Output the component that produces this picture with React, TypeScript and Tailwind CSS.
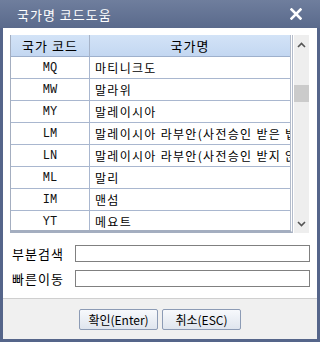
import React from 'react';

const rows = [
  { code: 'MQ', name: '마티니크도' },
  { code: 'MW', name: '말라위' },
  { code: 'MY', name: '말레이시아' },
  { code: 'LM', name: '말레이시아 라부안(사전승인 받은 법인)' },
  { code: 'LN', name: '말레이시아 라부안(사전승인 받지 않은 법인)' },
  { code: 'ML', name: '말리' },
  { code: 'IM', name: '맨섬' },
  { code: 'YT', name: '메요트' },
  { code: 'MX', name: '멕시코' },
];

const font = { fontFamily: '"Noto Sans CJK KR", "Liberation Sans", sans-serif' };

export default function App() {
  return (
    <div
      className="w-[320px] h-[342px] bg-[#55658a] flex flex-col px-[3px] pb-[3px] text-[12px] text-black"
      style={font}
    >
      {/* title bar */}
      <div className="h-[28px] flex items-center justify-between bg-gradient-to-b from-[#6f7e9d] to-[#5a6a8c] -mx-[3px] pl-[17px] pr-[18px]">
        <span className="text-white text-[13px] leading-none tracking-[1px]">국가명 코드도움</span>
        <svg width="12" height="12" viewBox="0 0 12 12">
          <path d="M1.5 1.5 L10.5 10.5 M10.5 1.5 L1.5 10.5" stroke="#ffffff" strokeWidth="2.6" strokeLinecap="square" />
        </svg>
      </div>

      {/* body */}
      <div className="flex-1 bg-white flex flex-col">
        <div className="pt-[7px] pl-[7px] pr-[8px]">
          <div className="flex h-[198px] gap-[1px]">
            {/* table */}
            <div className="w-[283px] h-full border-l border-r-[3px] border-r-[#b4bccb] border-l-[#a4aec0] border-b-[3px] border-b-[#a4aec0] overflow-hidden flex flex-col" style={{ borderRightStyle: 'double' }}>
              <div className="h-[22px] shrink-0 flex bg-gradient-to-b from-[#d3e3f7] to-[#c3d7f1] border-b border-[#9eb0cc] text-[13px] tracking-[1px]">
                <div className="w-[79px] border-r border-[#a6b3c8] flex items-center justify-center">국가 코드</div>
                <div className="flex-1 flex items-center justify-center">국가명</div>
              </div>
              {rows.map((r) => (
                <div key={r.code} className="h-[22px] shrink-0 flex border-b border-[#a9b7cf]">
                  <div
                    className="w-[79px] border-r border-[#a9b7cf] flex items-center justify-center text-[12px] text-[#111]"
                    style={{ fontFamily: '"Liberation Mono", monospace' }}
                  >
                    {r.code}
                  </div>
                  <div className="flex-1 flex items-center pl-[5px] whitespace-nowrap overflow-hidden tracking-[1.3px]">{r.name}</div>
                </div>
              ))}
            </div>
            {/* scrollbar */}
            <div className="w-[15px] h-full bg-[#eeeeee] flex flex-col">
              <div className="h-[18px] flex items-center justify-center pt-[2px]">
                <svg width="9" height="6" viewBox="0 0 9 6">
                  <path d="M1 5 L4.5 1.5 L8 5" stroke="#555" strokeWidth="1.6" fill="none" />
                </svg>
              </div>
              <div className="h-[32px]" />
              <div className="h-[17px] bg-[#cbcbcb]" />
              <div className="flex-1" />
              <div className="h-[18px] flex items-center justify-center">
                <svg width="9" height="6" viewBox="0 0 9 6">
                  <path d="M1 1 L4.5 4.5 L8 1" stroke="#555" strokeWidth="1.6" fill="none" />
                </svg>
              </div>
            </div>
          </div>
        </div>

        {/* search fields */}
        <div className="mt-[12px] pl-[9px] pr-[7px] flex flex-col gap-[8px]">
          <div className="flex items-center h-[17px]">
            <span className="w-[63px] shrink-0 text-[13px] leading-none tracking-[1px]">부분검색</span>
            <div className="flex-1 h-[17px] border border-[#808080] bg-white" />
          </div>
          <div className="flex items-center h-[17px]">
            <span className="w-[63px] shrink-0 text-[13px] leading-none tracking-[1px]">빠른이동</span>
            <div className="flex-1 h-[17px] border border-[#808080] bg-white" />
          </div>
        </div>

        {/* footer */}
        <div className="mt-[11px] flex-1 border-t border-[#cfcfcf] bg-[#f0f0f0] flex justify-center gap-[4px] pt-[10px]">
          <button className="w-[79px] h-[21px] rounded-[2px] border border-[#8c9bb5] bg-gradient-to-b from-[#f7f9fc] to-[#dfe5ee] text-[12px] leading-none">
            확인(Enter)
          </button>
          <button className="w-[79px] h-[21px] rounded-[2px] border border-[#8c9bb5] bg-gradient-to-b from-[#f7f9fc] to-[#dfe5ee] text-[12px] leading-none">
            취소(ESC)
          </button>
        </div>
      </div>
    </div>
  );
}
